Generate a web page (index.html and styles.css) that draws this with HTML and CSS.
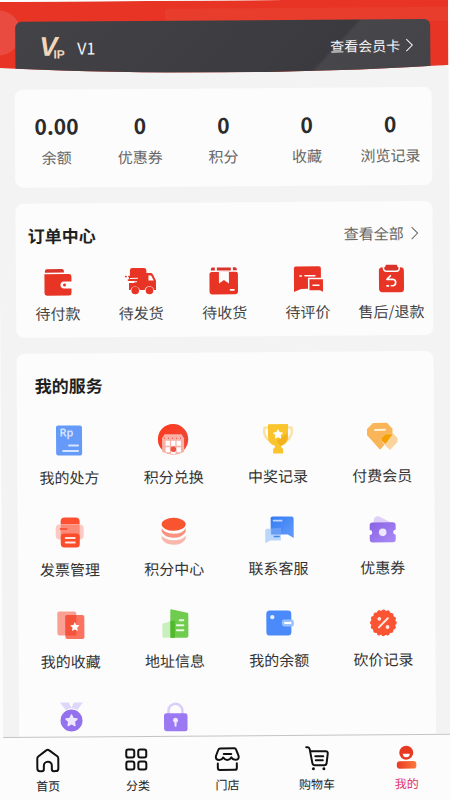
FILE: index.html
```html
<!DOCTYPE html>
<html lang="zh-CN">
<head>
<meta charset="utf-8">
<meta name="viewport" content="width=device-width, initial-scale=1">
<title>我的</title>
<link rel="stylesheet" href="styles.css">
</head>
<body>
<div class="screen">
  <main class="content">
    <header class="hero">
      <a class="vip" href="#card">
        <svg class="vip-logo" viewBox="0 0 26 26" aria-hidden="true"><text class="vip-v" x="-1" y="21">V<tspan class="vip-ip" x="13" y="24">IP</tspan></text></svg>
        <span class="vip-level">V1</span>
        <span class="vip-more">查看会员卡</span>
        <svg class="chevron" viewBox="0 0 8 14" aria-hidden="true"><path d="M1 1l6 6-6 6"/></svg>
      </a>
    </header>

    <section class="card stats">
      <a class="stat" href="#balance"><b>0.00</b><span>余额</span></a>
      <a class="stat" href="#coupon"><b>0</b><span>优惠券</span></a>
      <a class="stat" href="#points"><b>0</b><span>积分</span></a>
      <a class="stat" href="#favorites"><b>0</b><span>收藏</span></a>
      <a class="stat" href="#history"><b>0</b><span>浏览记录</span></a>
    </section>

    <section class="card orders">
      <div class="orders-head">
        <h2>订单中心</h2>
        <a class="all" href="#orders">查看全部<svg class="chevron" viewBox="0 0 8 14" aria-hidden="true"><path d="M1 1l6 6-6 6"/></svg></a>
      </div>
      <div class="order-grid">
        <a class="order" href="#pay">
          <svg viewBox="0 0 32 32" aria-hidden="true"><path fill="#d9332b" d="M3 7V5.500a2 2 0 0 1 2-2h15a2 2 0 0 1 2 2V7z"/><path fill="#e83424" d="M2.500 8.500H27a2.500 2.500 0 0 1 2.500 2.500v5H22a3.500 3.500 0 0 0 0 7h7.500v4.500A2.500 2.500 0 0 1 27 30H5a2.500 2.500 0 0 1-2.500-2.500z"/><circle cx="22.500" cy="19.500" r="1.500" fill="#e83424"/></svg>
          <span>待付款</span></a>
        <a class="order" href="#ship">
          <svg viewBox="0 0 32 32" aria-hidden="true"><path fill="#e83424" d="M5 5.500Q5 3 7.500 3H19q2.500 0 2.500 2.500V8H26q1 0 2 1.500l3 6V25h-2a4.800 4.800 0 0 0-9.300 0h-4.900a4.800 4.800 0 0 0-9.300 0H4v-7h5.500v-2H5v-1.500h-1V12h1z"/><path fill="#fcfcfc" d="M23.500 10.500h2.700l2.600 5h-5.300z"/><path stroke="#e83424" stroke-width="1.600" stroke-linecap="round" d="M0.800 11.500h.4M4 11.500h8M3.500 15h5"/><path stroke="#fcfcfc" d="M5 13.300h8M9 16.800h3"/><circle cx="10.200" cy="25.500" r="3.800" fill="#e83424"/><circle cx="24.500" cy="25.500" r="3.800" fill="#e83424"/></svg>
          <span>待发货</span></a>
        <a class="order" href="#receive">
          <svg viewBox="0 0 32 32" aria-hidden="true"><path fill="#d9332b" d="M4.500 3H7v3H3V4.500Q3 3 4.500 3zM9 3h14v3H9zM25 3h2q2 0 2 2v1h-4z"/><path fill="#e83424" d="M4 7.500h24q2 0 2 2V27a3 3 0 0 1-3 3H4.500a3 3 0 0 1-3-3V10q0-2.500 2.500-2.500z"/><path fill="#fcfcfc" d="M11 7.500h10V19l-5-3.500-5 3.500z"/><path stroke="#fcfcfc" stroke-width="1.600" stroke-linecap="round" d="M22.500 25.500H26"/></svg>
          <span>待收货</span></a>
        <a class="order" href="#review">
          <svg viewBox="0 0 32 32" aria-hidden="true"><path fill="#e83424" d="M2 4.500Q2 2.500 4 2.500h23q2 0 2 2V14H16v11H9l-7 3z"/><path fill="#e83424" d="M17.500 15.500H31V28l-3-1.500H17.500z"/><path stroke="#fcfcfc" stroke-width="1.500" stroke-linecap="round" d="M8 12h1.500M13 12h10M21 21.500h6"/></svg>
          <span>待评价</span></a>
        <a class="order" href="#refund">
          <svg viewBox="0 0 32 32" aria-hidden="true"><rect x="4" y="4" width="25" height="25" rx="3.500" fill="#e83424"/><path fill="#d9332b" stroke="#fcfcfc" stroke-width="1.500" d="M10.500.700h12q.500 3 2 3.300 0 4-3 4h-10q-3 0-3-4 1.500-.300 2-3.300z"/><path fill="none" stroke="#fcfcfc" stroke-width="1.700" stroke-linecap="round" stroke-linejoin="round" d="M15.500 12.500l-3.500 3.500h6a3.300 3.300 0 0 1 0 6.500h-1.500M13.500 22.500h-1.500"/></svg>
          <span>售后/退款</span></a>
      </div>
    </section>

    <section class="card services">
      <h2>我的服务</h2>
      <div class="service-grid">
        <a class="service" href="#rx">
          <svg viewBox="0 0 32 32" aria-hidden="true"><rect x="3" y="1" width="26" height="30" rx="2" fill="#659af8"/><text class="rp" x="6.500" y="12">Rp</text><path stroke="#d6e5ff" stroke-width="2" stroke-linecap="round" d="M16 21h9M10 26.500h15"/></svg>
          <span>我的处方</span></a>
        <a class="service" href="#redeem">
          <svg viewBox="0 0 32 32" aria-hidden="true"><defs><linearGradient id="r" x2="1" y2="1"><stop stop-color="#ff391d"/><stop offset="1" stop-color="#e94b3d"/></linearGradient></defs><circle cx="16" cy="15.500" r="15.200" fill="url(#r)"/><path fill="#f9b1a7" d="M7.500 10.500h17l2.500 4V28q-10 6-22 0V14.500z"/><path stroke="#e9473c" stroke-dasharray="1 3" d="M7 14.500h18"/><path fill="#fff" d="M8.500 17h4.300v5H8.500zM14 17h4.300v5H14zM19.500 17h4.300v5h-4.300zM8.500 23.500h4.300v5H8.500zM14 23.500h4.300v7H14zM19.500 23.500h4.300v5h-4.300z"/><circle cx="16.200" cy="25.500" r="2.800" fill="#eb5145"/></svg>
          <span>积分兑换</span></a>
        <a class="service" href="#prizes">
          <svg viewBox="0 0 32 32" aria-hidden="true"><path fill="none" stroke="#fbe3a8" stroke-width="2.500" stroke-linejoin="round" d="M7 4.500H2.500Q.500 14 8.500 18M25 4.500h4.500Q31.500 14 23.500 18"/><path fill="#f9c42d" d="M6 1h20v14q0 5-7 8v1l2 2v4.500H11V26l2-2v-1q-7-3-7-8z"/><path fill="#f2ae18" d="M25.500 10v6q-1 4-7 7l-4-5z" opacity=".75"/><path fill="#fff" stroke="#fff" stroke-linejoin="round" d="M16 6.800l1.300 2.700 3 .400-2.200 2.100.500 3L16 13.600 13.400 15l.500-3-2.200-2.100 3-.400z"/></svg>
          <span>中奖记录</span></a>
        <a class="service" href="#member">
          <svg viewBox="0 0 32 32" aria-hidden="true"><path fill="#f9b557" stroke="#f9b557" stroke-width="2" stroke-linejoin="round" d="M7.500 1.500h13l5 5.500v5L14 26 2 12.500V7z"/><path fill="#fad49d" stroke="#fad49d" stroke-linejoin="round" d="M19.500 12h8l3.500 4v3.500L24 27l-7.500-7v-4z"/><path fill="#f4a000" d="M19.500 12h7L19.500 21.500l-3.500-2.500V15.500z"/><path stroke="#fff1d8" stroke-width="2" stroke-linecap="round" d="M9 7.500h10"/></svg>
          <span>付费会员</span></a>
        <a class="service" href="#invoice">
          <svg viewBox="0 0 32 32" aria-hidden="true"><path fill="#fb5132" d="M7 8V5q0-4 4-4h11q4 0 4 4v3z"/><rect x="2" y="8" width="28" height="15" rx="4" fill="#fccac2"/><path fill="#fb8a77" d="M7 8h19v15H7z"/><rect x="7" y="17" width="19" height="14" rx="3.500" fill="#fb4c2c"/><path stroke="#f9573e" stroke-width="2" stroke-linecap="round" d="M7 12.500h6"/><path stroke="#ffe5df" stroke-width="2" stroke-linecap="round" d="M12 21.500h9M12 26h9"/></svg>
          <span>发票管理</span></a>
        <a class="service" href="#points-center">
          <svg viewBox="0 0 32 32" aria-hidden="true"><ellipse cx="16" cy="8.500" rx="12" ry="6.500" fill="#f95430"/><path fill="#f9927e" d="M4 12.500q3.500 5.500 12 5.500t12-5.500V16q-3 6-12 6T4 16z"/><path fill="#f9b8ab" d="M4 20q4 4.500 12 4.500T28 20v3q-3 6-12 6T4 23z"/></svg>
          <span>积分中心</span></a>
        <a class="service" href="#support">
          <svg viewBox="0 0 32 32" aria-hidden="true"><defs><linearGradient id="b" x2="1" y2="1"><stop stop-color="#347cf2"/><stop offset="1" stop-color="#659cfb"/></linearGradient></defs><path fill="url(#b)" d="M8 3q0-1.500 2-1.500h19q2 0 2 2V23l-6-3.500H8z"/><path fill="#b0d0fc" opacity=".85" d="M2.500 15q0-1.500 2-1.500h13.700v12H7.500L2.500 28z"/><path fill="#4f8cf2" opacity=".7" d="M8.500 13.500h9.700v6H8.500z"/><path stroke="#bdd6ff" stroke-width="1.800" stroke-linecap="round" d="M11 5.500h8"/><path stroke="#4184ee" stroke-width="1.500" d="M11 21.500h6"/></svg>
          <span>联系客服</span></a>
        <a class="service" href="#coupons">
          <svg viewBox="0 0 32 32" aria-hidden="true"><defs><linearGradient id="p" x2="1" y2="1"><stop stop-color="#8962e3"/><stop offset="1" stop-color="#aa8bf7"/></linearGradient></defs><path fill="#ded0f8" d="M7 9V5.500q1-4 5-3.500l14 7z"/><path fill="url(#p)" d="M6 8h20q3 0 3 3v4.500a2.500 2.500 0 0 0 0 5V25q0 3-3 3H6q-3 0-3-3v-4.500a2.500 2.500 0 0 0 0-5V11q0-3 3-3z"/><circle cx="16" cy="18" r="3.800" fill="#eee6ff"/></svg>
          <span>优惠券</span></a>
        <a class="service" href="#saved">
          <svg viewBox="0 0 32 32" aria-hidden="true"><rect x="3" y="3" width="19" height="24" rx="2" fill="#f99f93"/><rect x="11" y="6.500" width="19" height="24" rx="2" fill="#fa7360"/><path fill="#f5533b" d="M11 8.500q0-2 2-2h9V27H11z"/><path fill="#fff" d="M20.500 13.500l1.400 3 3.300.400-2.400 2.300.600 3.300-2.900-1.600-2.900 1.600.600-3.300-2.400-2.300 3.300-.400z"/></svg>
          <span>我的收藏</span></a>
        <a class="service" href="#address">
          <svg viewBox="0 0 32 32" aria-hidden="true"><path fill="#caefbf" d="M4 16l8-2.500V30H5q-1 0-1-1z"/><path fill="#70cc4f" d="M12 3q0-2 2-1.300L29 5q1 .3 1 1.500V28q0 2-2 2H12z"/><path fill="#50b92e" d="M12 13h4.500v17H12z"/><path stroke="#e8fae1" stroke-width="2" stroke-linecap="round" d="M21.500 12.500h3.500M18.500 17.500H25M18.500 22.500H25"/></svg>
          <span>地址信息</span></a>
        <a class="service" href="#wallet">
          <svg viewBox="0 0 32 32" aria-hidden="true"><rect x="3" y="3.500" width="25" height="25" rx="3.500" fill="#4a8afa"/><rect x="18.500" y="12.500" width="12" height="7" rx="2.500" fill="#9ac1fd"/><path stroke="#fff" stroke-width="2" d="M21 16h7"/><circle cx="9" cy="10" r="2.200" fill="#e5efff"/></svg>
          <span>我的余额</span></a>
        <a class="service" href="#bargain">
          <svg viewBox="0 0 32 32" aria-hidden="true"><circle cx="16" cy="16.500" r="12.300" fill="#fa5432"/><circle cx="16" cy="16.500" r="11.500" fill="none" stroke="#fa5432" stroke-width="3.800" stroke-linecap="round" stroke-dasharray="0.010 4.506"/><path stroke="#ffe6df" stroke-width="2" stroke-linecap="round" d="M11.500 21l9-9"/><circle cx="12" cy="12.500" r="1.900" fill="#ffe6df"/><circle cx="20.200" cy="20.700" r="1.900" fill="#ffe6df"/></svg>
          <span>砍价记录</span></a>
        <a class="service" href="#medal" aria-label="勋章">
          <svg viewBox="0 0 32 32" aria-hidden="true"><path fill="#dfd7f9" d="M5 2h9l3 6-6 2zM28 2h-9l-3 6 6 2z"/><circle cx="16.500" cy="20" r="11.500" fill="#9472ed" stroke="#fcfcfc"/><path fill="#eee7ff" stroke="#eee7ff" stroke-width="1.500" stroke-linejoin="round" d="M16.500 14.500l1.700 3.500 3.800.500-2.800 2.700.700 3.800-3.400-1.800-3.400 1.800.700-3.800-2.800-2.700 3.800-.500z"/></svg></a>
        <a class="service" href="#lock" aria-label="密码">
          <svg viewBox="0 0 32 32" aria-hidden="true"><path fill="none" stroke="#d9cdfa" stroke-width="2.500" d="M9.500 15v-4a7 7 0 0 1 14 0v4"/><rect x="5" y="13.500" width="23.500" height="18" rx="2.500" fill="#9b79f3"/><circle cx="16.500" cy="20.500" r="2.500" fill="#eee7ff"/><path stroke="#eee7ff" stroke-width="2" stroke-linecap="round" d="M16.500 21v5"/></svg></a>
      </div>
    </section>
  </main>

  <nav class="tabs">
    <a class="tab" href="#home"><svg viewBox="0 0 28 28" aria-hidden="true"><path d="M3 12q0-1.500 1-2.300l8-6q1.500-1.200 3 0l8 6q1 .800 1 2.300V21.500q0 3-2.500 3h-2q-2 0-2-2V19a4 4 0 0 0-8 0v3.500q0 2-2 2h-2q-2.500 0-2.500-3z"/></svg><span>首页</span></a>
    <a class="tab" href="#category"><svg viewBox="0 0 28 28" aria-hidden="true"><rect x="3" y="3.500" width="8" height="8" rx="2"/><rect x="15" y="3.500" width="8" height="8" rx="2"/><rect x="3" y="15.500" width="8" height="8" rx="2"/><rect x="15" y="15.500" width="8" height="8" rx="2"/></svg><span>分类</span></a>
    <a class="tab" href="#store"><svg viewBox="0 0 28 28" aria-hidden="true"><path d="M7 3h14q1.500 0 2 1.500l2.300 6q.700 4-3.300 4-2.500 0-4-2.500-1.500 2.500-4 2.500T10 12q-1.500 2.500-4 2.500-4 0-3.300-4L5 4.500Q5.500 3 7 3zM10.500 8.500h7.500M4.500 18v4.500q0 2 2 2h15q2 0 2-2V18"/></svg><span>门店</span></a>
    <a class="tab" href="#cart"><svg viewBox="0 0 28 28" aria-hidden="true"><path d="M3 2.500h1.500q1.500 0 2 2L9 18q.500 2.500 2.500 2.500H21q2 0 2.300-2L24.500 9q.200-2.500-2-2.500H7M12 11.500h8M12.500 15.500h7"/><circle class="solid" cx="10" cy="24" r="1.500"/><circle class="solid" cx="20.500" cy="24" r="1.500"/></svg><span>购物车</span></a>
    <a class="tab active" href="#me" aria-current="page"><svg viewBox="0 0 28 28" aria-hidden="true"><defs><linearGradient id="m" x2="1"><stop stop-color="#e83a22"/><stop offset="1" stop-color="#fb7a3c"/></linearGradient></defs><circle class="face" cx="14" cy="8.500" r="7"/><path class="smile" d="M10.500 9.500h7a3.500 3.500 0 0 1-7 0z"/><rect class="body" x="4.500" y="17" width="19.500" height="7.500" rx="3"/></svg><span>我的</span></a>
  </nav>
</div>
</body>
</html>
```
FILE: styles.css
```css
* { box-sizing: border-box; }

body {
  margin: 0;
  overflow: hidden;
  background: #fcfcfc;
  color: #333;
  font-family: "Noto Sans CJK SC", "Noto Sans", sans-serif;
  font-size: 15px;
  line-height: 20px;
}

a { color: inherit; text-decoration: none; }
svg { display: block; flex: none; overflow: visible; }

h2 {
  margin: 0;
  color: #1f1f1f;
  font-size: 17px;
  font-weight: 700;
  line-height: 24px;
}

/* The whole screen leans slightly counter-clockwise. */
.screen {
  display: flex;
  flex-direction: column;
  height: 100vh;
  transform: translate(-2px, 2px) rotate(-0.4deg);
  transform-origin: 0 0;
}

.content {
  flex: 1;
  min-height: 0;
  overflow: hidden;
  background: #f3f3f3;
}

.hero {
  padding: 20px 18px 0 17px;
  background:
    radial-gradient(circle at 0 31px, #e94b40 22px, transparent 23px),
    linear-gradient(#e83c2c, #e83c2c) 100% 8px / 63% 14px no-repeat,
    #e83424;
  clip-path: ellipse(124% 100% at 50% 0);
}

.vip {
  display: flex;
  align-items: center;
  padding: 0 17px 0 25px;
  height: 52px;
  border-radius: 6px 6px 0 0;
  background: linear-gradient(133deg, #434247, #3b3a3f 74%, #47464a 75%, #444348);
  color: #f5f5f5;
}

.vip-logo { width: 26px; height: 26px; fill: #f3d6b9; }
.vip-v { font: italic 700 27px "Liberation Sans", sans-serif; }
.vip-ip { font: 700 12px "Liberation Sans", sans-serif; }
.vip-level { margin-left: 11px; flex: 1; font-size: 16px; }
.vip-more { font-size: 14px; }

.chevron {
  width: 8px;
  height: 14px;
  margin-left: 5px;
  fill: none;
  stroke: currentColor;
}

.card {
  margin: 16px 17px 0 16px;
  border-radius: 8px;
  background: #fcfcfc;
}

.stats {
  display: grid;
  grid-template-columns: repeat(5, 1fr);
  padding: 22px 0 20px;
}

.stat {
  display: flex;
  flex-direction: column;
  align-items: center;
  gap: 8px;
  color: #666;
  white-space: nowrap;
}

.stat b { color: #2b2b2b; font-size: 21px; font-weight: 700; line-height: 28px; }

.orders { padding: 20px 0 14px; }

.orders-head {
  display: flex;
  align-items: center;
  justify-content: space-between;
  padding: 0 14px 0 12px;
}

.all { display: flex; align-items: center; color: #666; }
.all .chevron { margin-left: 7px; }

.order-grid {
  display: grid;
  grid-template-columns: repeat(5, 1fr);
  margin-top: 18px;
}

.order, .service {
  display: flex;
  flex-direction: column;
  align-items: center;
  white-space: nowrap;
}

.order { gap: 6px; color: #444; }
.order svg, .service svg { width: 32px; height: 32px; }

.services { padding: 20px 0; }
.services h2 { padding-left: 18px; }

.service-grid {
  display: grid;
  grid-template-columns: repeat(4, 1fr);
  row-gap: 29px;
  margin-top: 27px;
}

.service { gap: 11px; }
.rp { fill: #d6e5ff; font: 600 11px "Noto Sans", sans-serif; }

.tabs {
  display: grid;
  grid-template-columns: repeat(5, 1fr);
  height: 65px;
  padding-right: 2px;
  border-top: 1px solid #c4c4c4;
  background: #fcfcfc;
}

.tab {
  display: flex;
  flex-direction: column;
  align-items: center;
  gap: 3px;
  padding-top: 9px;
  color: #222;
  font-size: 12px;
  line-height: 16px;
}

.tab svg {
  width: 28px;
  height: 28px;
  fill: none;
  stroke: #111;
  stroke-width: 2;
  stroke-linecap: round;
  stroke-linejoin: round;
}

.tab .solid { fill: #111; stroke: none; }
.tab.active { color: #e2366d; }
.tab.active svg { stroke: none; }
.face { fill: #e83a22; }
.smile { fill: #fff; }
.body { fill: url(#m); }
```
